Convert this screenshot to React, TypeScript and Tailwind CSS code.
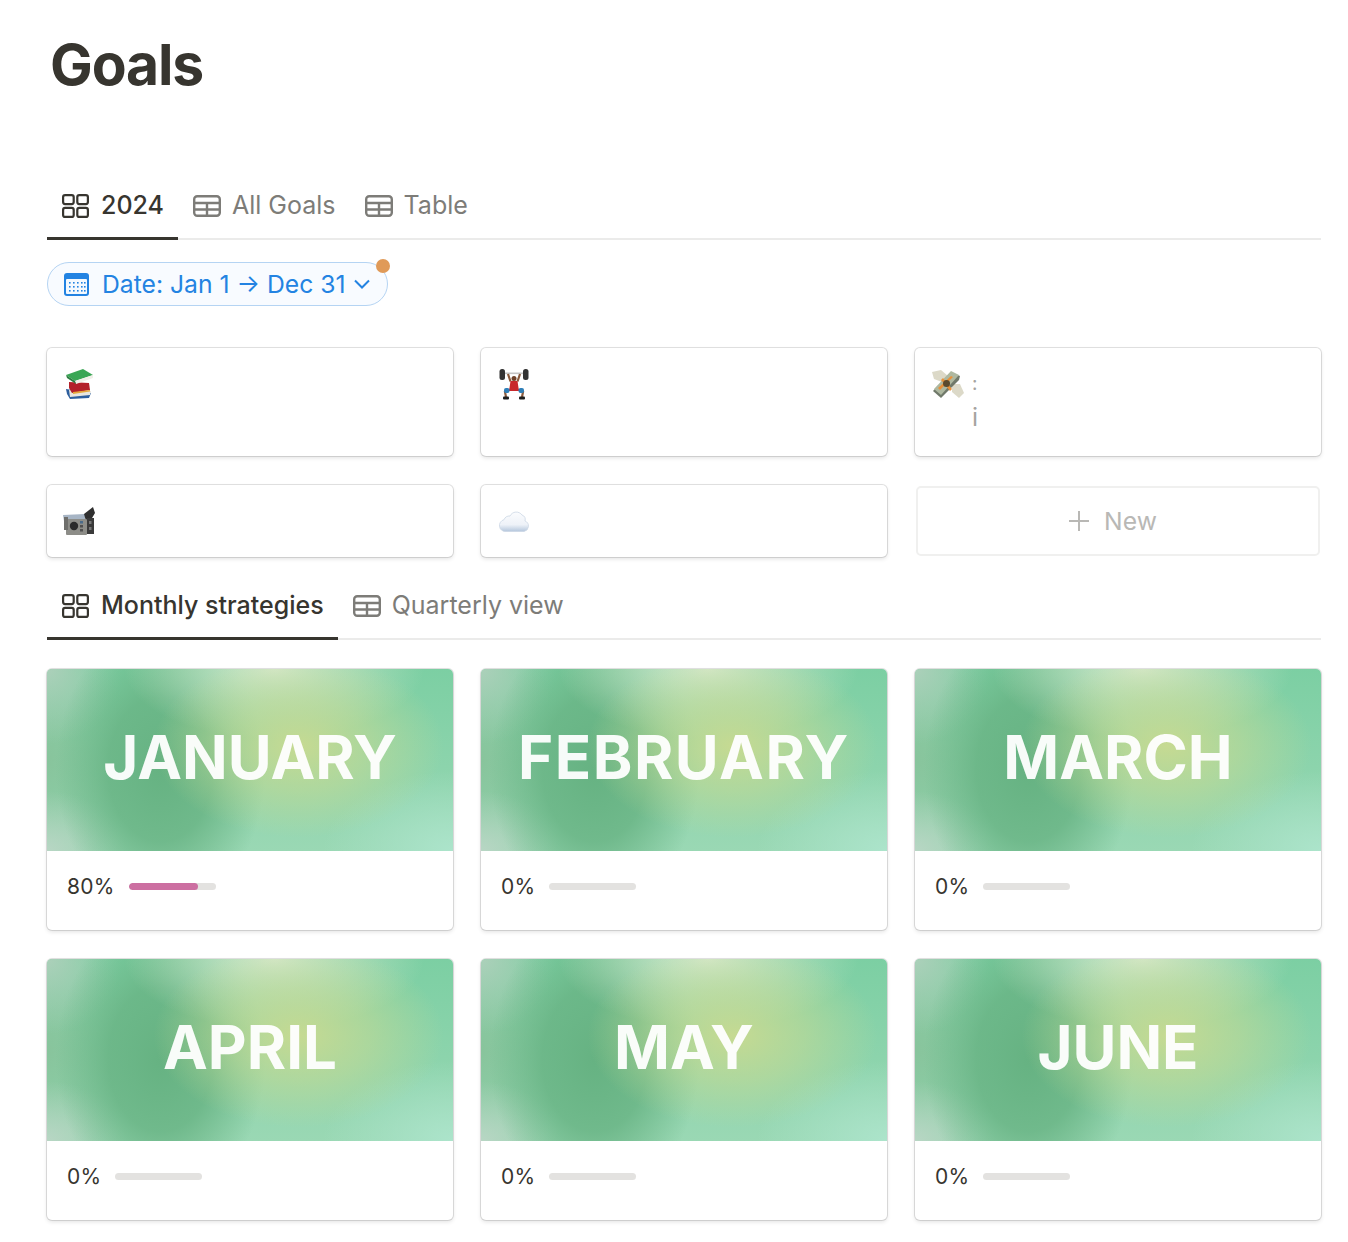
const coverBg =
  "bg-[radial-gradient(ellipse_145px_92px_at_62%_42%,rgba(198,218,146,1),rgba(198,218,146,0.55)_50%,rgba(198,218,146,0)_100%),radial-gradient(ellipse_150px_70px_at_56%_0%,rgba(212,232,204,1),rgba(212,232,204,0)_100%),radial-gradient(ellipse_105px_145px_at_28%_55%,rgba(102,178,130,1),rgba(102,178,130,0.8)_50%,rgba(102,178,130,0)_100%),radial-gradient(ellipse_130px_80px_at_100%_100%,rgba(172,228,203,1),rgba(172,228,203,0)_100%),radial-gradient(ellipse_75px_75px_at_0%_0%,rgba(172,208,186,1),rgba(172,208,186,0)_100%),radial-gradient(ellipse_80px_60px_at_0%_100%,rgba(184,214,196,1),rgba(184,214,196,0)_100%),radial-gradient(ellipse_90px_120px_at_0%_50%,rgba(136,196,156,1),rgba(136,196,156,0)_100%),linear-gradient(180deg,#7ccfa3,#9ad8b4)]";

function GridIcon() {
  return (
    <svg width="27" height="24" viewBox="0 0 27 24" fill="none" stroke="#37352f" strokeWidth="2.2">
      <rect x="1.1" y="1.1" width="10.6" height="9" rx="2" />
      <rect x="15.3" y="1.1" width="10.6" height="9" rx="2" />
      <rect x="1.1" y="13.9" width="10.6" height="9" rx="2" />
      <rect x="15.3" y="13.9" width="10.6" height="9" rx="2" />
    </svg>
  );
}

function TableIcon() {
  return (
    <svg width="28" height="22" viewBox="0 0 28 22" fill="none" stroke="#7d7c78" strokeWidth="2.4">
      <rect x="1.2" y="1.2" width="25.6" height="19.6" rx="3" />
      <path d="M1 8h26M1 14.5h26M14 8v13" />
    </svg>
  );
}

function Tab({ label, active, table }: { label: string; active?: boolean; table?: boolean }) {
  return (
    <div
      className={`flex h-[54px] items-center border-b-[3px] pb-[12px] pl-[15px] pr-[14px] text-[25px] ${
        table ? "gap-[11px]" : "gap-[12px]"
      } ${active ? "border-[#37352f] font-medium text-[#37352f]" : "border-transparent text-[#7d7c78]"}`}
    >
      {table ? <TableIcon /> : <GridIcon />}
      <span>{label}</span>
    </div>
  );
}

function CalendarIcon() {
  return (
    <svg width="25" height="23" viewBox="0 0 25 23">
      <rect width="25" height="23" rx="3" fill="#2383e2" />
      <rect x="2" y="6" width="21" height="15" rx="1" fill="#f4f9fe" />
      <g fill="#2383e2">
        {[9, 13, 17].map((y) =>
          [5, 9, 13, 17, 20].map((x) => <rect key={`${x}-${y}`} x={x} y={y} width="1.6" height="1.6" />)
        )}
      </g>
    </svg>
  );
}

function Books() {
  return (
    <svg width="28" height="30" viewBox="0 0 28 30">
      <path d="M1 20l25 4-2 5-19 1-3-5z" fill="#2e5f9e" />
      <path d="M4 21l22 1-1 4-20 2z" fill="#e8e6df" />
      <path d="M4 13l20 1 1 7-18 3-3-5z" fill="#b3202a" />
      <path d="M8 23l17-2v1.5L8 25z" fill="#e6a83c" />
      <path d="M1 6l17-6 10 6-18 6z" fill="#3aa655" />
      <path d="M10 12l18-6v3l-17 6z" fill="#f0efe8" />
      <path d="M1 6l9 6 1 3-9-6z" fill="#2c7d40" />
    </svg>
  );
}

function Lifter() {
  return (
    <svg width="30" height="32" viewBox="0 0 30 32">
      <rect x="4" y="4.5" width="22" height="1.6" fill="#c4c4c4" />
      <rect x="0.5" y="1" width="5.5" height="11" rx="2.5" fill="#333" />
      <rect x="24" y="1" width="5.5" height="11" rx="2.5" fill="#333" />
      <path d="M9 6l2.5 7.5M21 6l-2.5 7.5" stroke="#8a5a3c" strokeWidth="2.2" />
      <circle cx="15" cy="10.5" r="2.5" fill="#6f4229" />
      <path d="M11.5 13h7l1 7 1 3h-11l1-3z" fill="#c8282c" />
      <path d="M9 23l-3 1 1 5M21 23l3 1-1 5" fill="none" stroke="#8a5a3c" strokeWidth="2.2" />
      <rect x="5" y="20" width="5.5" height="5" rx="2" fill="#2f7fb8" />
      <rect x="19.5" y="20" width="5.5" height="5" rx="2" fill="#2f7fb8" />
      <rect x="4" y="28.5" width="6" height="3" rx="1" fill="#1d1d1d" />
      <rect x="20" y="28.5" width="6" height="3" rx="1" fill="#1d1d1d" />
    </svg>
  );
}

function Money() {
  return (
    <svg width="32" height="30" viewBox="0 0 32 30">
      <path d="M0 3l9-2 7 6-6 6-8-3z" fill="#dcd9c8" />
      <path d="M20 15l8 0 4 9-5 5-7-6z" fill="#dcd9c8" />
      <path d="M1 22L19 3l9 4-1 4L9 29z" fill="#70796a" />
      <path d="M2 20L19 2l8 4L9 26z" fill="#aeb8a0" />
      <path d="M9 11l9 11 2-2-9-11z" fill="#e8913a" />
      <path d="M8 21L21 8l-2-1L6 19z" fill="#e8913a" />
      <circle cx="14.500" cy="14.500" r="3.500" fill="#5b4a2e" />
    </svg>
  );
}

function Camera() {
  return (
    <svg width="32" height="30" viewBox="0 0 32 30">
      <path d="M0 9l22-1v7H1z" fill="#a7b5c5" />
      <path d="M21 8l9-7 2 6-3 5-6 3z" fill="#2f2f2f" />
      <rect x="3" y="13" width="21" height="16" rx="1" fill="#8d8d88" />
      <rect x="1" y="11" width="4" height="13" fill="#6f6f6c" />
      <circle cx="11" cy="20" r="4.2" fill="#2b2b2b" />
      <rect x="17" y="15" width="3" height="2.500" fill="#4a6b8a" />
      <rect x="17" y="19" width="3" height="2.500" fill="#505050" />
      <rect x="17" y="23" width="3" height="2.500" fill="#505050" />
      <rect x="24" y="12" width="7" height="16" fill="#3a3a3a" />
      <rect x="26" y="15" width="2.500" height="3" fill="#777" />
      <rect x="26" y="21" width="2.500" height="3" fill="#777" />
    </svg>
  );
}

function Cloud() {
  return (
    <svg width="32" height="22" viewBox="0 0 32 22">
      <defs>
        <linearGradient id="cl" x1="0" y1="0" x2="0" y2="1">
          <stop offset="0" stopColor="#fbfcfe" />
          <stop offset="0.65" stopColor="#eef2f8" />
          <stop offset="1" stopColor="#b4c6dc" />
        </linearGradient>
      </defs>
      <path
        d="M7 21.500a6 6 0 0 1-2-11.800A6 6 0 0 1 11 6a7 7 0 0 1 12-1 5 5 0 0 1 3 6 5.500 5.500 0 0 1-1 10.500z"
        fill="url(#cl)"
        stroke="#ccd7e4"
        strokeWidth="0.8"
      />
    </svg>
  );
}

const shadowCard = "rounded-[5px] bg-white shadow-[0_0_0_1px_rgba(15,15,15,0.12),0_2px_4px_rgba(15,15,15,0.12)]";

function MonthCard({ name, value }: { name: string; value: number }) {
  return (
    <div className={`h-[261px] overflow-hidden ${shadowCard}`}>
      <div className={`flex h-[182px] items-center justify-center pb-[7px] ${coverBg}`}>
        <span className={`text-[60px] font-bold text-white/95 ${name === "FEBRUARY" ? "tracking-[1.5px]" : ""}`}>{name}</span>
      </div>
      <div className="flex items-center gap-[14px] px-[20px] pt-[24px] text-[21px] leading-[24px] tracking-[0.01em] text-[#37352f]">
        <span>{value}%</span>
        <div className="-mt-[1px] h-[7px] w-[87px] overflow-hidden rounded-full bg-[#e3e2e0]">
          {/* 80% bar */}
          <div className="h-full rounded-full bg-[#cc6fa1]" style={{ width: `${value}%` }} />
        </div>
      </div>
    </div>
  );
}

const months = [
  { name: "JANUARY", value: 80 },
  { name: "FEBRUARY", value: 0 },
  { name: "MARCH", value: 0 },
  { name: "APRIL", value: 0 },
  { name: "MAY", value: 0 },
  { name: "JUNE", value: 0 },
];

export default function App() {
  return (
    <div className="min-h-[1242px] bg-white pl-[47px] pr-[27px] font-['Inter',sans-serif]">
      <h1 className="pl-[3px] pt-[27px] text-[57px] font-bold leading-[76px] tracking-[-0.02em] text-[#37352f]">Goals</h1>

      <div className="mt-[83px] flex border-b-2 border-[#ebebea]">
        <div className="-mb-[2px] flex">
          <Tab label="2024" active />
          <Tab label="All Goals" table />
          <Tab label="Table" table />
        </div>
      </div>

      <div className="relative mt-[22px] flex h-[44px] w-[341px] items-center rounded-full border border-[#b5d4f3] bg-[#f8fbff] pl-[16px] text-[24.7px] text-[#2383e2]">
        <CalendarIcon />
        <span className="ml-[13px] whitespace-nowrap pt-[2px]">Date: Jan 1 → Dec 31</span>
        <svg className="ml-[9px]" width="16" height="10" viewBox="0 0 16 10" fill="none" stroke="#2383e2" strokeWidth="2">
          <path d="M1 1.500l7 7 7-7" />
        </svg>
        <span className="absolute -right-[3px] -top-[4px] h-[14px] w-[14px] rounded-full bg-[#e09a58]" />
      </div>

      <div className="mt-[42px] grid grid-cols-3 gap-x-[28px] gap-y-[29px]">
        <div className={`h-[108px] px-[18px] pt-[21px] ${shadowCard}`}><Books /></div>
        <div className={`h-[108px] px-[18px] pt-[20px] ${shadowCard}`}><Lifter /></div>
        <div className={`flex h-[108px] gap-[8px] px-[17px] pt-[21px] ${shadowCard}`}>
          <Money />
          <div className="flex flex-col text-[#a5a4a0]">
            <span className="text-[19px] leading-[30px]">:</span>
            <span className="text-[25px] leading-[36px]">i</span>
          </div>
        </div>
        <div className={`flex h-[72px] items-center px-[16px] ${shadowCard}`}><Camera /></div>
        <div className={`flex h-[72px] items-center px-[18px] ${shadowCard}`}><Cloud /></div>
        <div className="m-px flex items-center justify-center gap-[15px] rounded-[5px] border-2 border-[#f0f0ef] pr-[10px] text-[24.7px] text-[#b9b8b5]">
          <svg width="20" height="20" viewBox="0 0 20 20" stroke="#b9b8b5" strokeWidth="2">
            <path d="M10 0v20M0 10h20" />
          </svg>
          <span className="pt-[2px]">New</span>
        </div>
      </div>

      <div className="mt-[29px] flex border-b-2 border-[#ebebea]">
        <div className="-mb-[2px] flex">
          <Tab label="Monthly strategies" active />
          <Tab label="Quarterly view" table />
        </div>
      </div>

      <div className="mt-[29px] grid grid-cols-3 gap-x-[28px] gap-y-[29px]">
        {months.map((m) => (
          <MonthCard key={m.name} name={m.name} value={m.value} />
        ))}
      </div>
    </div>
  );
}
